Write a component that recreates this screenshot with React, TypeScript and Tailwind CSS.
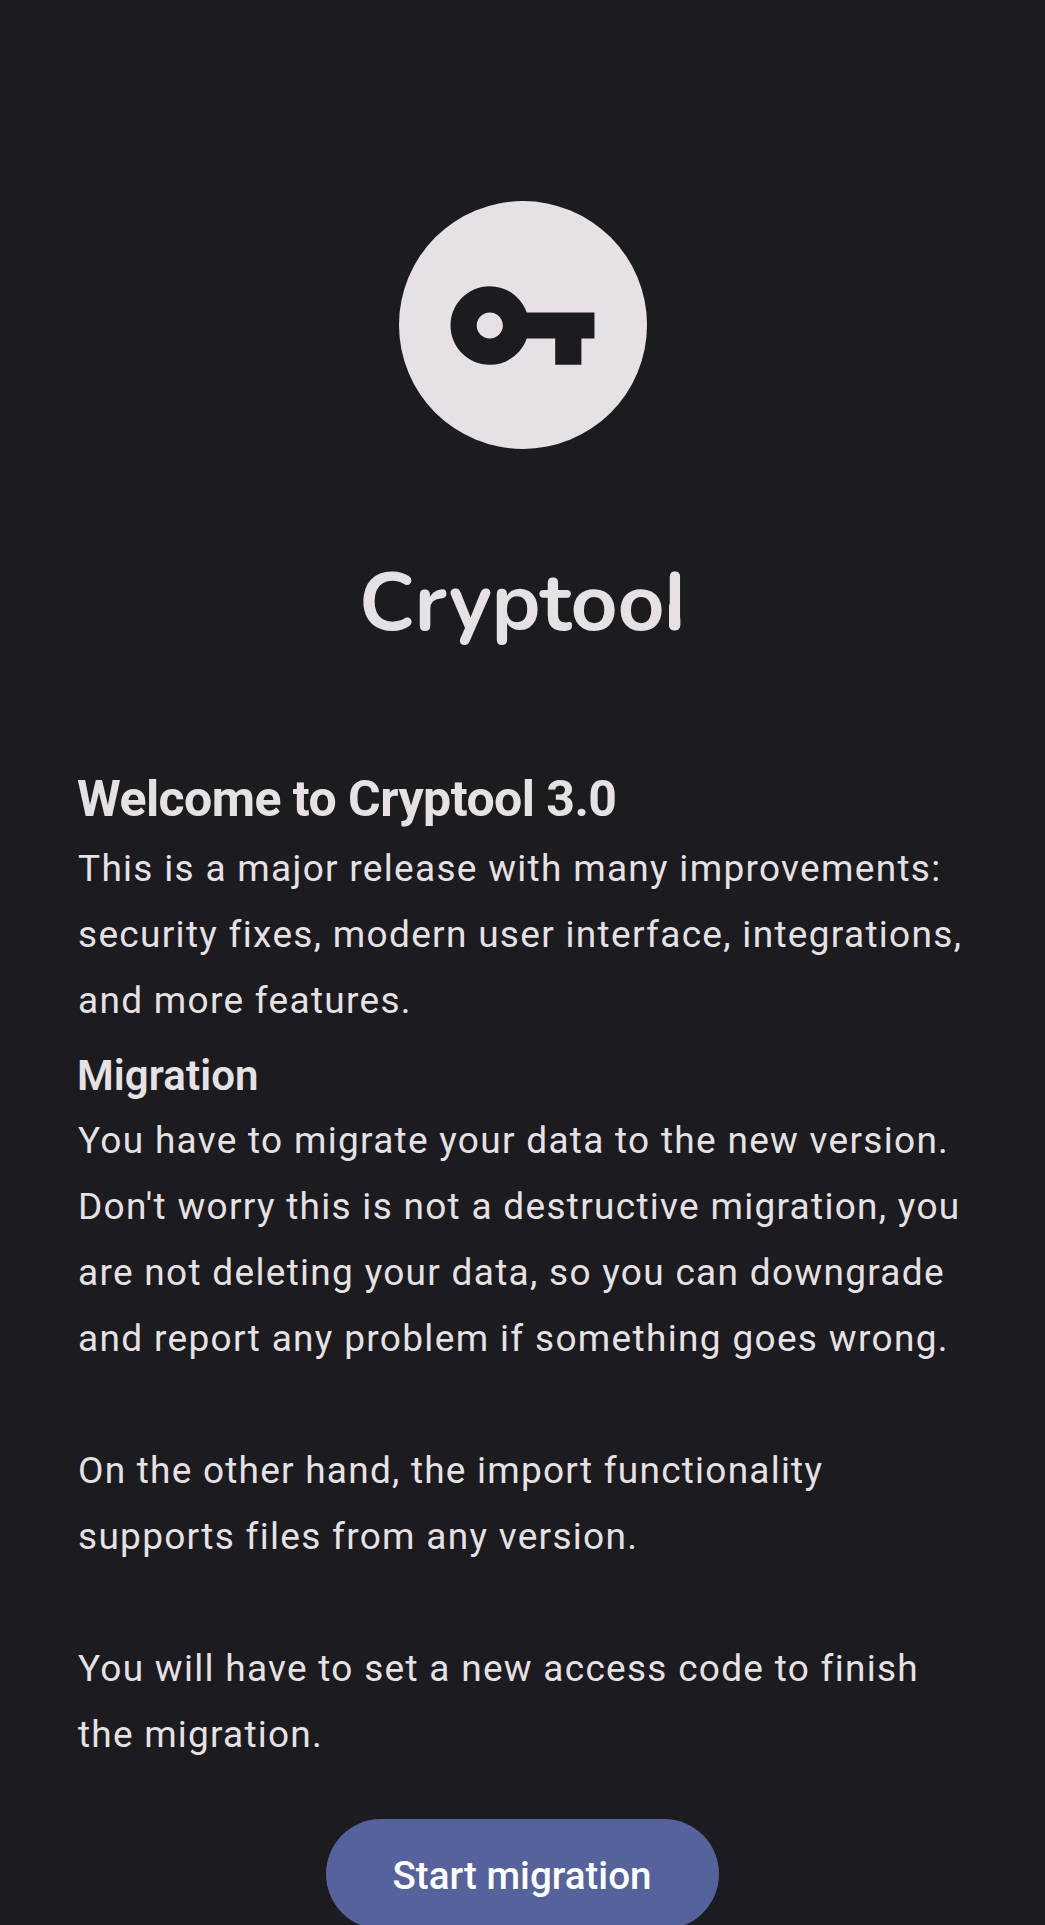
type Line = { text: string; tracking: string };

const intro: Line[] = [
  { text: "This is a major release with many improvements:", tracking: "tracking-[1.3px]" },
  { text: "security fixes, modern user interface, integrations,", tracking: "tracking-[1.31px]" },
  { text: "and more features.", tracking: "tracking-[1.3px]" },
];

const migration: Line[][] = [
  [
    { text: "You have to migrate your data to the new version.", tracking: "tracking-[1.29px]" },
    { text: "Don't worry this is not a destructive migration, you", tracking: "tracking-[1.29px]" },
    { text: "are not deleting your data, so you can downgrade", tracking: "tracking-[1.3px]" },
    { text: "and report any problem if something goes wrong.", tracking: "tracking-[1.33px]" },
  ],
  [
    { text: "On the other hand, the import functionality", tracking: "tracking-[1.23px]" },
    { text: "supports files from any version.", tracking: "tracking-[1.29px]" },
  ],
  [
    { text: "You will have to set a new access code to finish", tracking: "tracking-[1.28px]" },
    { text: "the migration.", tracking: "tracking-[1.22px]" },
  ],
];

function Paragraph({ lines }: { lines: Line[] }) {
  return (
    <p className="text-[37px] leading-[66px] whitespace-nowrap">
      {lines.map((line) => (
        <span key={line.text} className={`block ${line.tracking}`}>{line.text}</span>
      ))}
    </p>
  );
}

export default function App() {
  return (
    <main className="flex h-[1925px] w-[1045px] flex-col overflow-hidden bg-[#1c1b1f] pt-[201px] font-['Roboto',sans-serif] text-[#e6e1e5]">
      <div className="ml-px flex size-[248px] shrink-0 items-center justify-center self-center rounded-full bg-[#e6e1e5]">
        <svg viewBox="0 0 24 24" className="mr-px size-[157px] fill-[#1c1b1f]">
          <path d="M12.65 10C11.83 7.67 9.61 6 7 6c-3.31 0-6 2.69-6 6s2.69 6 6 6c2.61 0 4.83-1.67 5.65-4H17v4h4v-4h2v-4H12.65zM7 14c-1.1 0-2-.9-2-2s.9-2 2-2 2 .9 2 2-.9 2-2 2z" />
        </svg>
      </div>
      <h1 className="mt-[99px] flex h-[110px] shrink-0 self-center font-['Nunito','Lato',sans-serif] text-[82px] leading-[110px] font-bold tracking-[-0.35px]">
        <span>Cryptoo</span>
        {/* The l ends in a plain rounded stem: its tail is clipped and the foot rounded off */}
        <span className="relative w-[21.6px] [clip-path:inset(0_5.6px_27.4px_4px_round_0_0_5.5px_5.5px)] after:absolute after:bottom-[27.4px] after:left-[5.1px] after:h-[30px] after:w-[10.8px] after:rounded-full after:bg-[#e6e1e5]">l</span>
      </h1>
      <section className="mt-[107px] shrink-0 px-[78px]">
        <h2 className="-ml-px h-[71px] text-[50px] leading-[68px] font-[680] tracking-[-0.55px]">Welcome to Cryptool 3.0</h2>
        <Paragraph lines={intro} />
        <h3 className="mt-[9px] -ml-px h-[65px] text-[42px] leading-[66px] font-[650] tracking-[0.1px]">Migration</h3>
        <div className="flex flex-col gap-[66px]">
          {migration.map((lines) => <Paragraph key={lines[0].text} lines={lines} />)}
        </div>
      </section>
      <button className="mt-[51px] flex h-[110px] w-[393px] shrink-0 items-center justify-center self-center rounded-full bg-[#56629b] pt-[3px] pr-px text-[38.6px] font-medium text-white">Start migration</button>
    </main>
  );
}
